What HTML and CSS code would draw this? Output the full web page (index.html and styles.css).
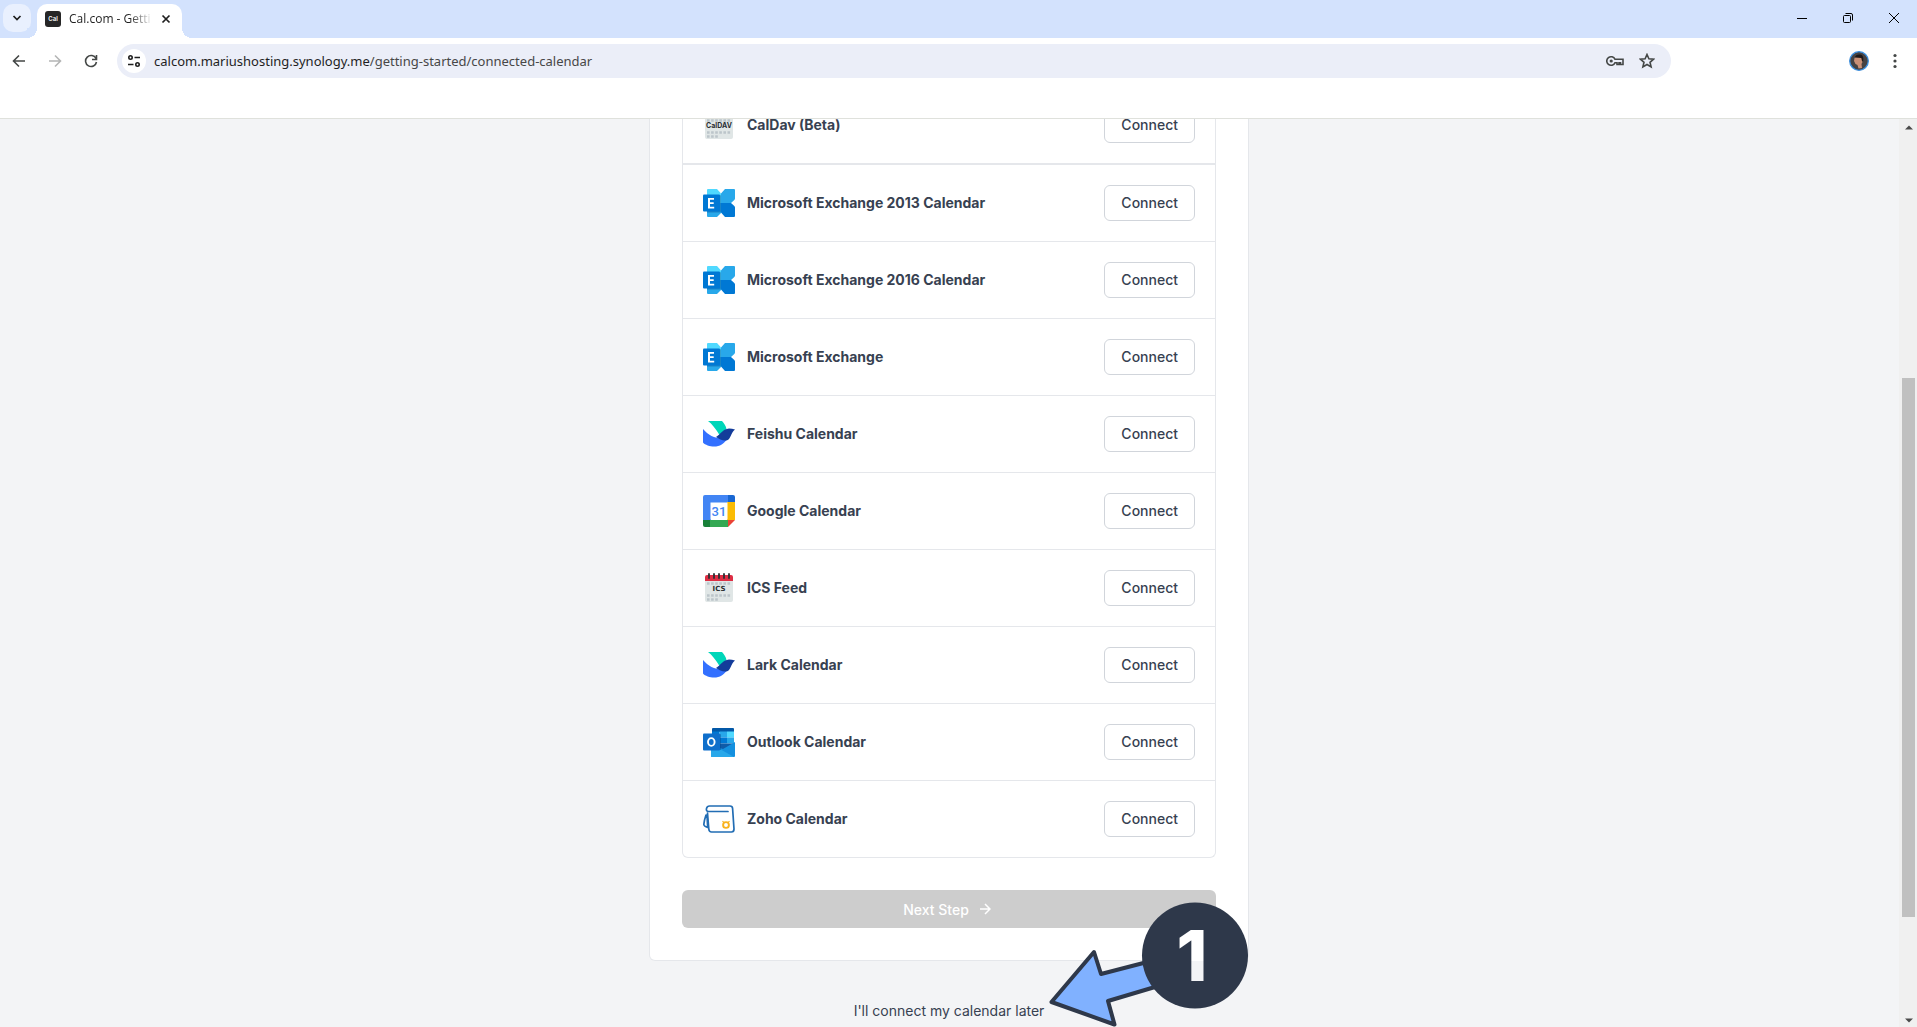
FILE: index.html
```html
<!DOCTYPE html>
<html lang="en">
<head>
<meta charset="utf-8">
<title>Cal.com - Getting Started</title>
<link rel="stylesheet" href="styles.css">
</head>
<body>
<svg class="defs" aria-hidden="true">
  <symbol id="exchange" viewBox="0 0 32 32">
    <path fill="#50d9ff" d="M5 2h9l4 4.500V16H4V3a1 1 0 0 1 1-1z"/>
    <path fill="#28a8ea" d="M4 16h14v10l-4 4H5a1 1 0 0 1-1-1z"/>
    <path fill="#28a8ea" d="M18 6.500L22 2h9a1 1 0 0 1 1 1v8.500a2 2 0 0 1-.7 1.500L28 16H18z"/>
    <path fill="#0078d4" d="M18 16h10l3.300 3a2 2 0 0 1 .7 1.500V29a1 1 0 0 1-1 1h-9l-4-4.500z"/>
    <path fill="#064a8c" opacity=".4" d="M4 8h13a1 1 0 0 1 1 1v15a1.500 1.500 0 0 1-1.500 1.500H4z"/>
    <rect fill="#0078d4" y="7.500" width="17" height="17" rx="1"/>
    <path fill="#fff" d="M5 11h6v1.800H7v2.500h3.700v1.700H7v2.700h4.200v1.800H5z"/>
  </symbol>
  <symbol id="lark" viewBox="0 0 32 32">
    <path fill="#00d6b9" d="M5 3h14c2 2 4 5 4.500 8l-7 6C13 11 9 6 5 3z"/>
    <path fill="#3370ff" d="M0 11c6 7 14 11 25 9-4 6-8 8.500-14 8.500-4 0-9-1.500-11-4z"/>
    <path fill="#133c9a" d="M13 19c5-3 7-8 13-8.500 2 0 4 .3 6 1-3 2-4 7-6 9.500-3 3-9 1-13-2z"/>
  </symbol>
  <symbol id="google" viewBox="0 0 32 32">
    <path fill="#4285f4" d="M2 0h23v8H8v17H0V2a2 2 0 0 1 2-2z"/>
    <path fill="#1967d2" d="M25 0h5a2 2 0 0 1 2 2v5h-7z"/>
    <path fill="#fbbc04" d="M24 7h8v18h-8z"/>
    <path fill="#188038" d="M0 25h8v7H2a2 2 0 0 1-2-2z"/>
    <path fill="#34a853" d="M7 25h18v7H7z"/>
    <path fill="#ea4335" d="M25 25h7l-7 7z"/>
    <path fill="#fff" d="M7.500 7.500h17v17h-17z"/>
    <text x="16" y="21" class="logo-date">31</text>
  </symbol>
  <symbol id="grid-calendar" viewBox="0 0 32 32">
    <path fill="#e0e6e6" d="M2 8h28v20a2 2 0 0 1-2 2H4a2 2 0 0 1-2-2z"/>
    <path fill="#dd2e44" d="M4 3h24a2 2 0 0 1 2 2v4H2V5a2 2 0 0 1 2-2z"/>
    <path fill="none" stroke="#292f33" stroke-width="1.800" stroke-linecap="round" d="M6 2v4M11 2v4M16 2v4M21 2v4M26 2v4"/>
    <path fill="none" stroke="#bcc5ca" stroke-width="2.600" stroke-dasharray="2.600 1.500" d="M4 11.500h24.500M4 23.500h24.500M4 27.500h11"/>
  </symbol>
  <symbol id="outlook" viewBox="0 0 32 32">
    <path fill="#0358a7" d="M9 4V3a1 1 0 0 1 1-1h20a1 1 0 0 1 1 1v3H9z"/>
    <path fill="#0078d4" d="M9 5.500h7.500v6H9z"/><path fill="#28a8ea" d="M16.500 5.500H24v6h-7.500z"/>
    <path fill="#50d9ff" d="M24 5.500h7v6h-7z"/><path fill="#0364b8" d="M9 11.500h7.500v12H9z"/>
    <path fill="#0078d4" d="M16.500 11.500H24v6h-7.500z"/><path fill="#28a8ea" d="M24 11.500h7v6h-7z"/>
    <path fill="#0f5ba8" d="M16.500 17.500H31v6H16.500z"/>
    <path fill="#1490df" d="M32 16v14a1 1 0 0 1-1 1H9a1 1 0 0 1-1-1V19l12 4z"/>
    <path fill="#28a8ea" d="M8 18l23 13H9a1 1 0 0 1-1-1z"/>
    <path fill="#064a8c" opacity=".45" d="M8 8h9a1 1 0 0 1 1 1v15H8z"/>
    <rect fill="#0f6fcb" y="7.500" width="17" height="17" rx="1"/>
    <ellipse cx="8.300" cy="16" rx="3.300" ry="3.900" fill="none" stroke="#fff" stroke-width="1.900"/>
  </symbol>
  <symbol id="zoho" viewBox="0 0 32 32">
    <g fill="none" stroke="#226db4" stroke-width="1.700" stroke-linecap="round" stroke-linejoin="round">
      <path d="M25 8.500H5.500C4 8.500 3 7.500 3.500 5.500 4 3.500 5 3 6.500 3H27c1.500 0 2.500 1 2.600 2.500L31 26c0 2-1 3-2.500 3H8.500C6.500 29 6 28 5.800 26L4.500 10"/>
      <path d="M4 12H3c-1 3-2 7-2.200 9.500C1 23 3 24 4.700 24.500z"/>
    </g>
    <circle cx="23" cy="22" r="2.900" fill="none" stroke="#f9b21d" stroke-width="1.900"/>
    <path stroke="#f9b21d" stroke-width="1.200" d="M19.500 18.200l1.500 1.500M26.500 18.200L25 19.700"/>
  </symbol>
</svg>

<header class="browser">
  <div class="tabstrip">
    <button class="tab-search" aria-label="Search tabs"><svg width="10" height="10" viewBox="0 0 10 10"><path d="M1.500 3L5 6.500 8.500 3"/></svg></button>
    <div class="tab">
      <span class="favicon">Cal</span>
      <span class="tab-title">Cal.com - Getti</span>
      <button class="tab-close" aria-label="Close tab"><svg width="10" height="10" viewBox="0 0 10 10"><path d="M1.500 1.500l7 7M8.500 1.500l-7 7"/></svg></button>
    </div>
    <div class="window-controls">
      <button aria-label="Minimize"><svg width="12" height="12" viewBox="0 0 12 12"><path d="M1 6.500h10"/></svg></button>
      <button aria-label="Restore"><svg width="12" height="12" viewBox="0 0 12 12"><rect x="1.500" y="3.500" width="7" height="7" rx="1"/><path d="M3.500 1.500H9A1.500 1.500 0 0 1 10.500 3v5.500"/></svg></button>
      <button aria-label="Close"><svg width="12" height="12" viewBox="0 0 12 12"><path d="M1 1l10 10M11 1L1 11"/></svg></button>
    </div>
  </div>
  <div class="toolbar">
    <nav class="nav-buttons">
      <button aria-label="Back"><svg width="14" height="14" viewBox="0 0 14 14"><path d="M13 7H2M7 1.500L1.500 7 7 12.500"/></svg></button>
      <button aria-label="Forward" disabled><svg width="14" height="14" viewBox="0 0 14 14"><path d="M1 7h11M7 1.500L12.500 7 7 12.500"/></svg></button>
      <button aria-label="Reload"><svg width="14" height="14" viewBox="0 0 14 14"><path d="M12 4.500A5.500 5.500 0 1 0 12.500 8M12.500 1v4.500H8"/></svg></button>
    </nav>
    <div class="omnibox">
      <button class="site-info" aria-label="Site information"><svg width="14" height="14" viewBox="0 0 14 14"><circle cx="3.500" cy="3.500" r="1.700"/><path d="M7.500 3.500H13M1 10.500h5.500"/><circle cx="10.500" cy="10.500" r="1.700"/></svg></button>
      <span class="url">calcom.mariushosting.synology.me<span>/getting-started/connected-calendar</span></span>
      <button aria-label="Passwords"><svg width="18" height="12" viewBox="0 0 18 12"><path d="M9 4.300A4.300 4.300 0 1 0 9 7.700h2V9.500h2V7.700h1.500V9.500H17V4.300z"/><circle cx="5.200" cy="6" r="1.600" class="solid"/></svg></button>
      <button aria-label="Bookmark"><svg width="16" height="16" viewBox="0 0 16 16"><path d="M8 1.500l1.900 4.300 4.700.4-3.600 3.100 1.100 4.600L8 11.500l-4.100 2.400L5 9.300 1.400 6.200l4.700-.4z"/></svg></button>
    </div>
    <div class="profile">
      <button aria-label="Profile"><svg class="avatar" width="20" height="20" viewBox="0 0 20 20"><circle cx="10" cy="10" r="9.300" fill="#464243" stroke="#3b8fe0" stroke-width="1.300"/><path fill="#c98f76" d="M5.500 7c2-2 6-2 8 0l.5 3-1.500 3 .5 4-3.500.5L8.500 14 6.500 13 5 10z"/><path fill="#1d1819" d="M6 6.500C6 4 9 3 11.500 3.500S15 7 14 11l-1-1-.7-3z"/></svg></button>
      <button aria-label="Menu"><svg width="4" height="16" viewBox="0 0 4 16"><g class="solid"><circle cx="2" cy="2.500" r="1.600"/><circle cx="2" cy="8" r="1.600"/><circle cx="2" cy="13.500" r="1.600"/></g></svg></button>
    </div>
  </div>
</header>

<div class="viewport">
  <main class="page">
    <section class="card">
      <ul class="apps">
        <li class="app section-end"><svg class="app-logo"><use href="#grid-calendar"/><text x="16" y="19" class="logo-name">CalDAV</text></svg><h3>CalDav (Beta)</h3><button class="connect">Connect</button></li>
        <li class="app"><svg class="app-logo"><use href="#exchange"/></svg><h3>Microsoft Exchange 2013 Calendar</h3><button class="connect">Connect</button></li>
        <li class="app"><svg class="app-logo"><use href="#exchange"/></svg><h3>Microsoft Exchange 2016 Calendar</h3><button class="connect">Connect</button></li>
        <li class="app"><svg class="app-logo"><use href="#exchange"/></svg><h3>Microsoft Exchange</h3><button class="connect">Connect</button></li>
        <li class="app"><svg class="app-logo"><use href="#lark"/></svg><h3>Feishu Calendar</h3><button class="connect">Connect</button></li>
        <li class="app"><svg class="app-logo"><use href="#google"/></svg><h3>Google Calendar</h3><button class="connect">Connect</button></li>
        <li class="app"><svg class="app-logo"><use href="#grid-calendar"/><text x="16" y="19" class="logo-name ics">ICS</text></svg><h3>ICS Feed</h3><button class="connect">Connect</button></li>
        <li class="app"><svg class="app-logo"><use href="#lark"/></svg><h3>Lark Calendar</h3><button class="connect">Connect</button></li>
        <li class="app"><svg class="app-logo"><use href="#outlook"/></svg><h3>Outlook Calendar</h3><button class="connect">Connect</button></li>
        <li class="app"><svg class="app-logo"><use href="#zoho"/></svg><h3>Zoho Calendar</h3><button class="connect">Connect</button></li>
      </ul>
      <button class="next" disabled>Next Step <svg width="12" height="12" viewBox="0 0 12 12"><path d="M1 6h10M6 1l5 5-5 5"/></svg></button>
      <svg class="callout" width="200" height="127" viewBox="0 0 200 127">
        <defs><linearGradient id="digit" gradientUnits="userSpaceOnUse" x1="0" y1="0" x2="0" y2="127"><stop offset=".48" stop-color="#fff"/><stop offset=".48" stop-color="#f3f4f6"/></linearGradient></defs>
        <path d="M2.500 102L45 52l7 22 54-14v27l-47 14 6.500 23.500z" fill="#80b1ff" stroke="#2e384a" stroke-width="4" stroke-linejoin="round"/>
        <circle cx="146" cy="55.500" r="53" fill="#2e384a"/>
        <text x="143" y="81" class="callout-number" fill="url(#digit)">1</text>
      </svg>
    </section>
    <a class="skip" href="#later">I'll connect my calendar later</a>
  </main>
  <div class="scrollbar" aria-hidden="true">
    <svg width="8" height="5" viewBox="0 0 8 5"><path d="M0 4.500L4 .5l4 4z"/></svg>
    <div class="track"><div class="thumb"></div></div>
    <svg width="8" height="5" viewBox="0 0 8 5"><path d="M0 .5l4 4 4-4z"/></svg>
  </div>
</div>
</body>
</html>
```
FILE: styles.css
```css
* { box-sizing: border-box; }

body {
  margin: 0;
  height: 100vh;
  display: flex;
  flex-direction: column;
  overflow: hidden;
  background: #f3f4f6;
  font-family: Inter, sans-serif;
  font-size: 14px;
  color: #374151;
}

.defs { display: none; }

button {
  font: inherit;
  color: inherit;
  border: 0;
  padding: 0;
  background: none;
}

/* Browser frame */
.browser {
  height: 119px;
  flex: none;
  background: #fff;
  border-bottom: 1px solid #dfe1dc;
  font-family: "Noto Sans", sans-serif;
  color: #1f1f1f;
}

.browser button {
  display: flex;
  align-items: center;
  justify-content: center;
}

.browser svg {
  fill: none;
  stroke: #444746;
  stroke-width: 1.600;
}

.browser .solid { fill: #444746; stroke: none; }
.browser .avatar { stroke: none; }

.tabstrip {
  height: 38px;
  display: flex;
  background: #d3e2fd;
}

.browser .tab-search {
  width: 28px;
  height: 28px;
  margin: 4px 6px 0 3px;
  border-radius: 10px;
  background: #e9f0fe;
}

.browser .tab-search svg, .browser .tab-close svg { stroke: #1f1f1f; stroke-width: 1.700; }
.browser .site-info svg { stroke: #1f1f1f; }

.tab {
  width: 145px;
  margin-top: 4px;
  padding: 0 11px 4px 8px;
  display: flex;
  align-items: center;
  position: relative;
  border-radius: 10px 10px 0 0;
  background: #fff;
}

.tab::before, .tab::after {
  content: "";
  position: absolute;
  bottom: 0;
  width: 10px;
  height: 10px;
}

.tab::before { right: 100%; background: radial-gradient(circle at 0 0, #d3e2fd 10px, #fff 10px); }
.tab::after { left: 100%; background: radial-gradient(circle at 100% 0, #d3e2fd 10px, #fff 10px); }

.favicon {
  width: 16px;
  height: 16px;
  border-radius: 3px;
  background: #262626;
  color: #fff;
  font: 600 6px/16px Inter, sans-serif;
  text-align: center;
}

.tab-title {
  margin-left: 8px;
  white-space: nowrap;
  font-family: "Open Sans", sans-serif;
  font-size: 12px;
  line-height: 16px;
  mask-image: linear-gradient(90deg, #000 60px, transparent 84px);
}

.browser .tab-close { margin-left: auto; }

.window-controls {
  margin-left: auto;
  display: flex;
  height: 36px;
}

.window-controls button { width: 46px; }
.browser .window-controls svg { stroke: #000; stroke-width: 1; }

.toolbar {
  height: 46px;
  display: flex;
  align-items: center;
  background: #fff;
}

.nav-buttons {
  width: 117px;
  flex: none;
  display: flex;
  padding-left: 1px;
}

.nav-buttons button { width: 36px; height: 34px; }
.nav-buttons button:disabled { opacity: 0.4; }

.omnibox {
  flex: 1;
  height: 34px;
  padding: 0 16px 0 5px;
  display: flex;
  align-items: center;
  gap: 15px;
  border-radius: 17px;
  background: #ebeef8;
}

.browser .site-info {
  width: 24px;
  height: 24px;
  margin-right: -7px;
  border-radius: 12px;
  background: #fff;
}

.url { flex: 1; font-size: 13px; }
.url span { color: #474747; }

.profile {
  width: 246px;
  flex: none;
  padding-right: 20px;
  display: flex;
  align-items: center;
  justify-content: flex-end;
  gap: 24px;
}

/* Page */
.viewport {
  flex: 1;
  min-height: 0;
  display: flex;
}

.page {
  flex: 1;
  padding-right: 1px;
  overflow: hidden;
  display: flex;
  flex-direction: column;
  align-items: center;
}

/* The view is scrolled part of the way down the list. */
.card {
  width: 600px;
  max-width: 100%;
  flex: none;
  margin-top: -32px;
  padding: 0 32px 32px;
  position: relative;
  border: 1px solid #e5e7eb;
  border-top: 0;
  border-radius: 0 0 6px 6px;
  background: #fff;
}

.apps {
  list-style: none;
  margin: 0 0 32px;
  padding: 0;
  border: 1px solid #e5e7eb;
  border-top: 0;
  border-radius: 0 0 6px 6px;
}

.app {
  display: flex;
  align-items: center;
  gap: 12px;
  padding: 20px;
}

.app + .app { border-top: 1px solid #e5e7eb; }
.section-end { border-bottom: 1px solid #e5e7eb; }

.app-logo { width: 32px; height: 32px; flex: none; }

.app h3 {
  flex: 1;
  margin: 0;
  font-size: 14px;
  line-height: 20px;
  font-weight: 700;
}

.connect {
  height: 36px;
  padding: 0 16px 2px;
  border: 1px solid #d1d5db;
  border-radius: 6px;
  font-weight: 500;
}

.logo-date { font: 500 13px Roboto, sans-serif; fill: #4285f4; text-anchor: middle; }
.logo-name { font: 700 7px Inter, sans-serif; fill: #292f33; text-anchor: middle; }
.ics { font-family: "DejaVu Sans", sans-serif; }

.next {
  width: 100%;
  height: 38px;
  padding-right: 4px;
  display: flex;
  align-items: center;
  justify-content: center;
  gap: 10px;
  border-radius: 6px;
  background: #cdcdcd;
  color: #fff;
  font-weight: 500;
}

.next svg { fill: none; stroke: #fff; stroke-width: 1.500; }

.skip {
  margin-top: 40px;
  line-height: 20px;
  color: #374151;
  text-decoration: none;
}

.callout {
  position: absolute;
  right: -1px;
  bottom: -67px;
}

.callout-number { font: 800 70px Inter, sans-serif; text-anchor: middle; }

.scrollbar {
  width: 18px;
  flex: none;
  padding: 6px 2px 4px 3px;
  display: flex;
  flex-direction: column;
  align-items: center;
  gap: 6px;
  background: #f0f0f0;
}

.scrollbar svg { fill: #4a4a4a; }
.track { flex: 1; width: 100%; display: flex; flex-direction: column; justify-content: flex-end; }
.thumb { height: 61.5%; margin-bottom: 95px; background: #c0c0c0; }
```
